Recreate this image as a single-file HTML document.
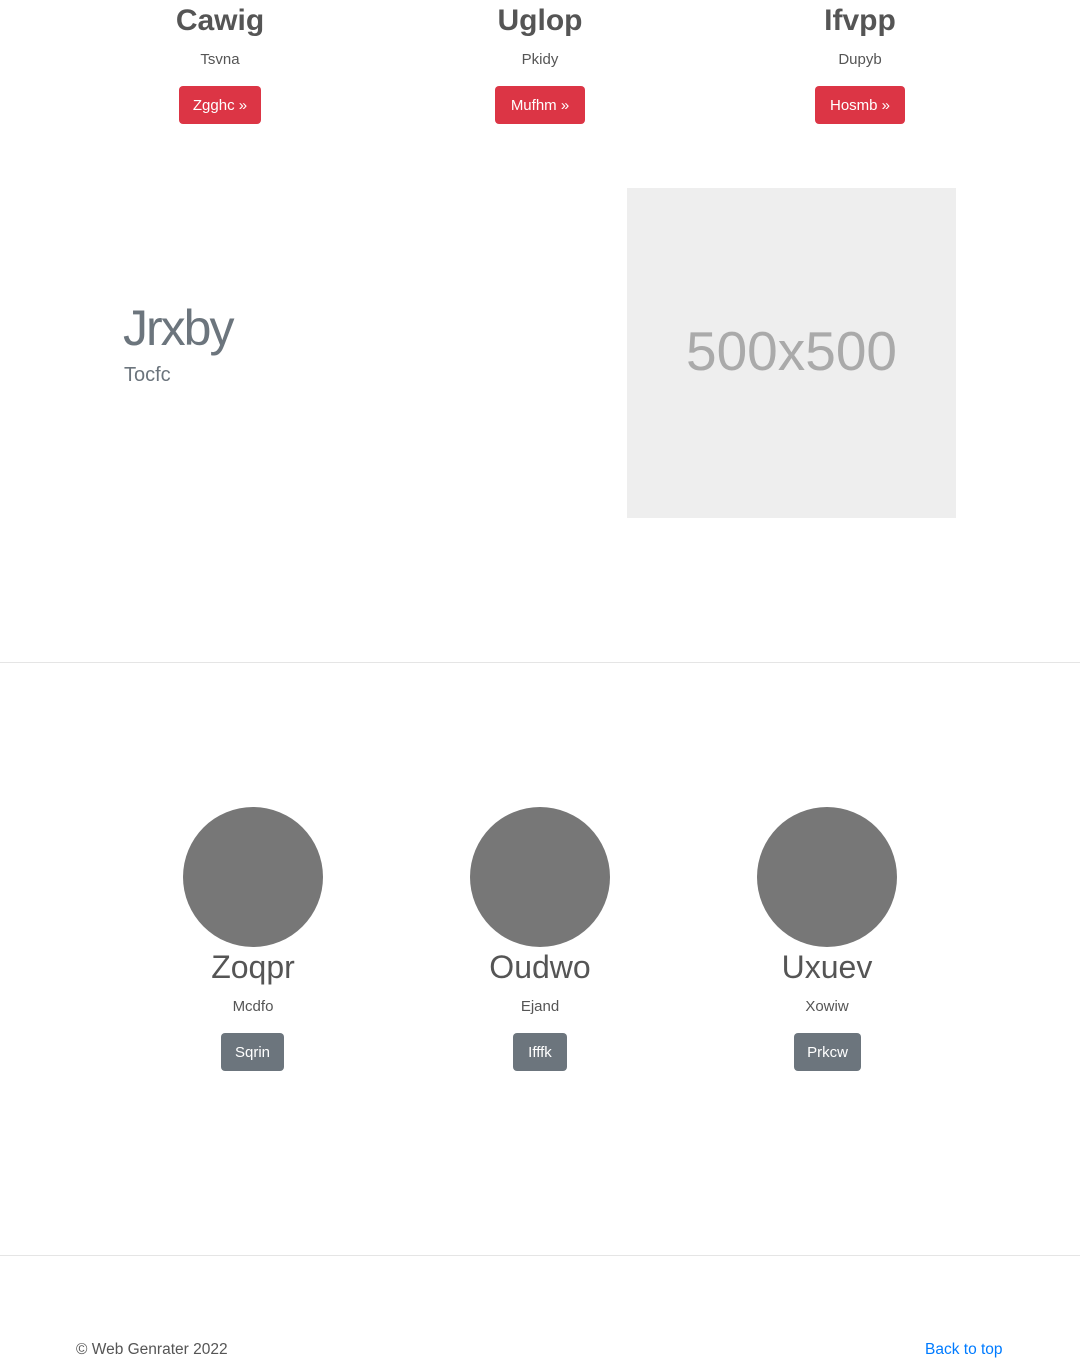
<!DOCTYPE html>
<html><head><meta charset="utf-8"><style>
*{margin:0;padding:0;box-sizing:border-box}
body{width:1080px;height:1360px;position:relative;background:#fff;font-family:"Liberation Sans",sans-serif;color:#555;overflow:hidden}
.a{position:absolute;text-align:center}
.h{font-size:30px;color:#555;font-weight:bold}
.s{font-size:15px;color:#555}
.btn{position:absolute;height:38px;line-height:40px;color:#fff;font-size:15px;border-radius:4px;text-align:center}
.r{background:#dc3545}
.g{background:#6c757d}
.c{position:absolute;width:140px;height:140px;border-radius:50%;background:#777;top:807px}
.hr{position:absolute;left:0;width:1080px;height:1px;background:#e5e5e5}
</style></head><body>
<div class="a h" style="left:120px;width:200px;top:4px">Cawig</div>
<div class="a h" style="left:440px;width:200px;top:4px">Uglop</div>
<div class="a h" style="left:760px;width:200px;top:4px">Ifvpp</div>
<div class="a s" style="left:120px;width:200px;top:51px">Tsvna</div>
<div class="a s" style="left:440px;width:200px;top:51px">Pkidy</div>
<div class="a s" style="left:760px;width:200px;top:51px">Dupyb</div>
<div class="btn r" style="left:179px;top:86px;width:82px">Zgghc »</div>
<div class="btn r" style="left:495px;top:86px;width:90px">Mufhm »</div>
<div class="btn r" style="left:815px;top:86px;width:90px">Hosmb »</div>

<div style="position:absolute;left:123px;top:299px;font-size:50px;color:#6c757d;font-weight:300;letter-spacing:-2px">Jrxby</div>
<div style="position:absolute;left:124px;top:364px;font-size:20px;color:#6c757d;font-weight:300">Tocfc</div>
<div style="position:absolute;left:627px;top:188px;width:329px;height:330px;background:#eee;color:#aaa;font-size:55px;text-align:center;line-height:326px">500x500</div>

<div class="hr" style="top:662px"></div>

<div class="c" style="left:183px"></div>
<div class="c" style="left:470px"></div>
<div class="c" style="left:757px"></div>
<div class="a" style="left:153px;width:200px;top:949px;font-size:32px;color:#555">Zoqpr</div>
<div class="a" style="left:440px;width:200px;top:949px;font-size:32px;color:#555">Oudwo</div>
<div class="a" style="left:727px;width:200px;top:949px;font-size:32px;color:#555">Uxuev</div>
<div class="a s" style="left:153px;width:200px;top:998px">Mcdfo</div>
<div class="a s" style="left:440px;width:200px;top:998px">Ejand</div>
<div class="a s" style="left:727px;width:200px;top:998px">Xowiw</div>
<div class="btn g" style="left:221px;top:1033px;width:63px">Sqrin</div>
<div class="btn g" style="left:513px;top:1033px;width:54px">Ifffk</div>
<div class="btn g" style="left:794px;top:1033px;width:67px">Prkcw</div>

<div class="hr" style="top:1255px"></div>
<div style="position:absolute;left:76px;top:1341px;font-size:15.5px;color:#555">© Web Genrater 2022</div>
<div style="position:absolute;left:925px;top:1341px;font-size:15.5px;color:#007bff">Back to top</div>
</body></html>
